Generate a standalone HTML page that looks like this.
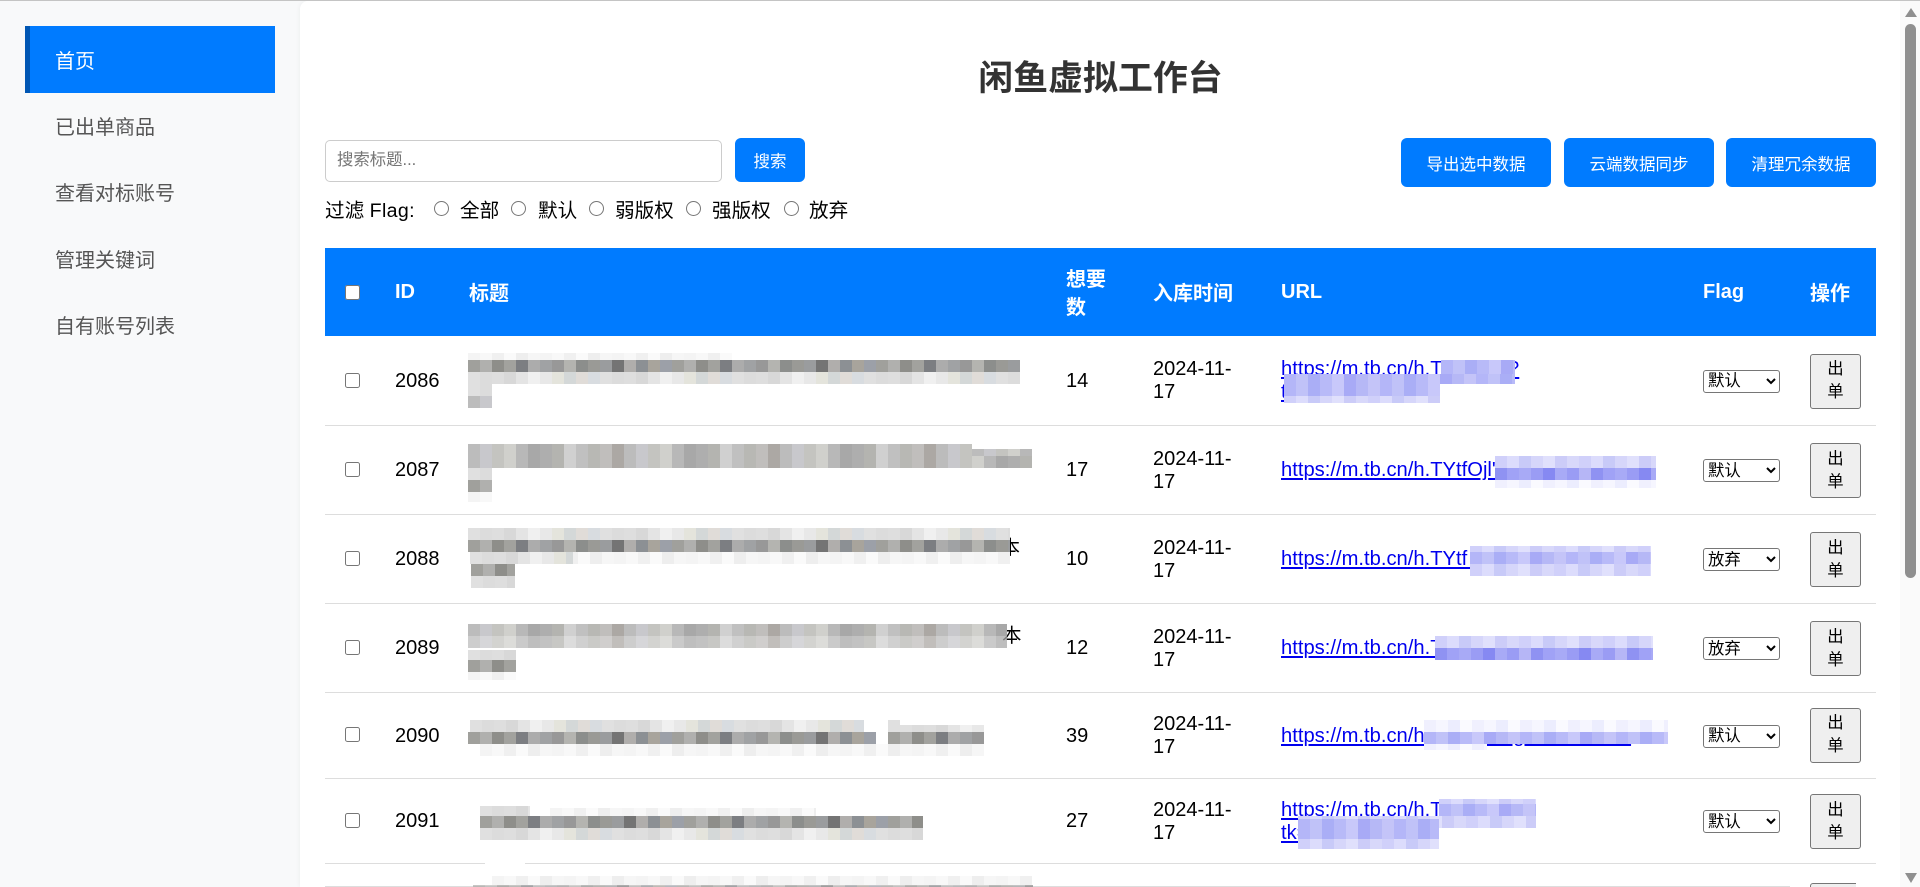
<!DOCTYPE html>
<html lang="zh-CN">
<head>
<meta charset="utf-8">
<title>闲鱼虚拟工作台</title>
<style>
*{box-sizing:border-box}
html,body{margin:0;padding:0;width:1920px;height:887px;overflow:hidden;background:#f8f9fa}
body{position:relative;font-family:"Liberation Sans","Noto Sans CJK SC",sans-serif;color:#000}
#topline{position:absolute;left:0;top:0;width:1920px;height:1px;background:#c4c4c4;z-index:20}
aside{position:absolute;left:0;top:1px;width:300px;height:886px;padding:25px 25px 0}
aside a{display:block;height:66.4px;line-height:71.4px;padding-left:30px;font-size:20px;color:#555;text-decoration:none}
aside a.on{height:67px;line-height:73px;background:#007bff;color:#fff;border-left:5px solid #0056b3;padding-left:25px}
main{position:absolute;left:300px;top:1px;width:1620px;height:886px;background:#fff;border-top-left-radius:8px;box-shadow:-1px 0 4px rgba(0,0,0,.04);overflow:hidden}
h1{position:absolute;left:25px;top:52px;width:1551px;margin:0;text-align:center;font-size:34.9px;line-height:52px;font-weight:700;color:#333}
.abs{position:absolute}
.search{left:25px;top:138.5px;width:397px;height:42px;border:1px solid #ccc;border-radius:5px;padding:0 11px;font:16.4px "Liberation Sans","Noto Sans CJK SC",sans-serif;outline:none;background:#fff}
.search::placeholder{color:#757575;opacity:1}
.btn{position:absolute;border:0;background:#007bff;color:#fff;border-radius:6px;font:16.5px "Liberation Sans","Noto Sans CJK SC",sans-serif;padding:0;text-align:center}
.flt{position:absolute;top:196px;font-size:19.6px;line-height:28px;white-space:nowrap}
.flt b{font-weight:400;letter-spacing:.35px}
input[type=radio]{position:absolute;margin:0;width:15px;height:15px;top:200px}
input[type=checkbox]{margin:0;width:15px;height:15px;display:block}
table{position:absolute;left:25px;top:247px;width:1551px;border-collapse:collapse;table-layout:fixed;font-size:20px;line-height:23px}
th{background:#007bff;color:#fff;font-weight:700;font-size:20px;text-align:left;padding:0 20px;height:88px;line-height:28.4px}
th span{position:relative;top:2px}
td{padding:0 20px;border-bottom:1px solid #ddd;vertical-align:middle;overflow:hidden}
td:nth-child(2),td:nth-child(4),td:nth-child(5),td:nth-child(6){padding-top:2px}
td:nth-child(6){font-size:20.2px}
td a{color:#0000ee;text-decoration:underline;white-space:nowrap}
select{display:block;width:77px;height:23px;font:16.4px "Liberation Sans","Noto Sans CJK SC",sans-serif;padding:0;margin-top:2px;border-radius:3px;border:1px solid #767676;background:#fff}
td button{display:block;width:51px;height:55px;margin:2px 0 0;padding:0 10px;font:16.4px/23px "Liberation Sans","Noto Sans CJK SC",sans-serif;background:#efefef;border:1px solid #767676;border-radius:3px;color:#000}
td .clip{height:23px;overflow:hidden}
td .clip button{margin-top:19px}
.z{position:absolute;background-repeat:repeat;z-index:5}
.d{background-size:204px 100%;background-image:linear-gradient(90deg,#a0a09c 0 12px,#b0b0ae 0 24px,#8e8e8a 0 36px,#a2a29e 0 48px,#7c7e82 0 60px,#acacac 0 72px,#a0a2a4 0 84px,#989898 0 96px,#b4b4b0 0 108px,#8c8e8c 0 120px,#9a9a96 0 132px,#9a9c9e 0 144px,#747474 0 156px,#b0aeac 0 168px,#8c9094 0 180px,#a8a49c 0 192px,#9ca0a8 0 204px)}
.m{background-size:156px 100%;background-image:linear-gradient(90deg,#bcbcbc 0 12px,#c8c8cc 0 24px,#c4c4c0 0 36px,#d0d0cc 0 48px,#b8b8b8 0 60px,#a8a8a8 0 72px,#aeaeae 0 84px,#b4b4b0 0 96px,#d0d0d0 0 108px,#c0c0c0 0 120px,#b8b8b4 0 132px,#c0bebc 0 144px,#aca8a4 0 156px)}
.l{background-size:132px 100%;background-image:linear-gradient(90deg,#e0e0e0 0 12px,#dcdcdc 0 24px,#dedede 0 36px,#d8d8d8 0 48px,#e4e4e4 0 60px,#f0f0f0 0 72px,#e8e8e8 0 84px,#e4e4dc 0 96px,#d4d8d8 0 108px,#e0dcd8 0 120px,#d8dce0 0 132px)}
.v{background-size:72px 100%;background-image:linear-gradient(90deg,#f4f4f4 0 12px,#f8f8f8 0 24px,#f0f0f0 0 36px,#fafafa 0 48px,#eeeeee 0 60px,#f6f6f6 0 72px)}
.bd{background-size:96px 100%;background-image:linear-gradient(90deg,#8f92f2 0 12px,#a0a2f6 0 24px,#a8aaf6 0 36px,#9a9cf4 0 48px,#8689f2 0 60px,#a8aaf6 0 72px,#9a9cf4 0 84px,#b6b6f6 0 96px)}
.bm{background-size:96px 100%;background-image:linear-gradient(90deg,#b4b6f8 0 12px,#c0c2f8 0 24px,#aaaef6 0 36px,#b8baf8 0 48px,#c8c8fa 0 60px,#a8aaf6 0 72px,#b6b8f6 0 84px,#c4c4f8 0 96px)}
.bl{background-size:84px 100%;background-image:linear-gradient(90deg,#d0d0fa 0 12px,#dcdcfc 0 24px,#c8caf8 0 36px,#d6d6fa 0 48px,#e0e0fc 0 60px,#ccccf8 0 72px,#d8d8fa 0 84px)}
.bv{background-size:48px 100%;background-image:linear-gradient(90deg,#f0f0fe 0 12px,#f6f6ff 0 24px,#ecedfe 0 36px,#fafaff 0 48px)}
.w{position:absolute;background:#fff;z-index:6}
#sb{position:absolute;left:1900px;top:1px;width:20px;height:886px;background:#fafafa;z-index:10}
#th{position:absolute;left:5px;top:23px;width:11px;height:554px;background:#8f8f8f;border-radius:6px}
#up{position:absolute;left:4.5px;top:7px;width:0;height:0;border-left:6px solid transparent;border-right:6px solid transparent;border-bottom:9px solid #8f8f8f}
#dn{position:absolute;left:4.5px;top:872px;width:0;height:0;border-left:6px solid transparent;border-right:6px solid transparent;border-top:10px solid #8f8f8f}
</style>
</head>
<body>
<div id="topline"></div>
<aside>
<a class="on" href="#">首页</a>
<a href="#">已出单商品</a>
<a href="#">查看对标账号</a>
<a href="#">管理关键词</a>
<a href="#">自有账号列表</a>
</aside>
<main>
<h1>闲鱼虚拟工作台</h1>
<input class="abs search" type="text" placeholder="搜索标题...">
<button class="btn" style="left:435px;top:137px;width:70px;height:44px">搜索</button>
<button class="btn" style="left:1101px;top:137px;width:150px;height:49px">导出选中数据</button>
<button class="btn" style="left:1264px;top:137px;width:150px;height:49px">云端数据同步</button>
<button class="btn" style="left:1426px;top:137px;width:150px;height:49px">清理冗余数据</button>
<span class="flt" style="left:25px">过滤 <b>Flag:</b></span>
<input type="radio" name="f" style="left:133.5px"><span class="flt" style="left:160px">全部</span>
<input type="radio" name="f" style="left:211px"><span class="flt" style="left:238px">默认</span>
<input type="radio" name="f" style="left:288.5px"><span class="flt" style="left:315px">弱版权</span>
<input type="radio" name="f" style="left:386px"><span class="flt" style="left:412px">强版权</span>
<input type="radio" name="f" style="left:483.5px"><span class="flt" style="left:509px">放弃</span>
<table>
<colgroup><col style="width:50px"><col style="width:74px"><col style="width:597px"><col style="width:87px"><col style="width:128px"><col style="width:422px"><col style="width:107px"><col style="width:86px"></colgroup>
<thead><tr><th><input type="checkbox"></th><th>ID</th><th><span>标题</span></th><th><span>想要数</span></th><th><span>入库时间</span></th><th>URL</th><th>Flag</th><th><span>操作</span></th></tr></thead>
<tbody>
<tr style="height:89px"><td><input type="checkbox"></td><td>2086</td><td></td><td>14</td><td>2024-11-17</td><td><a href="#">https://m.tb.cn/h.TuaBcDt?<br>tk=aBcDeFgHiJ</a></td><td><select><option>默认</option></select></td><td><button>出单</button></td></tr>
<tr style="height:89px"><td><input type="checkbox"></td><td>2087</td><td></td><td>17</td><td>2024-11-17</td><td><a href="#">https://m.tb.cn/h.TYtfOjl'aBcDeFgHiJk</a></td><td><select><option>默认</option></select></td><td><button>出单</button></td></tr>
<tr style="height:89px"><td><input type="checkbox"></td><td>2088</td><td></td><td>10</td><td>2024-11-17</td><td><a href="#">https://m.tb.cn/h.TYtf&nbsp;cDeFgHiJkL</a></td><td><select><option>放弃</option></select></td><td><button>出单</button></td></tr>
<tr style="height:89px"><td><input type="checkbox"></td><td>2089</td><td></td><td>12</td><td>2024-11-17</td><td><a href="#">https://m.tb.cn/h.TaBcDeFgHiJkLmN</a></td><td><select><option>放弃</option></select></td><td><button>出单</button></td></tr>
<tr style="height:86px"><td><input type="checkbox" style="margin-top:-2px"></td><td>2090</td><td></td><td>39</td><td>2024-11-17</td><td><a href="#">https://m.tb.cn/h.TaBcDeFgHiJkLmNoP</a></td><td><select><option>默认</option></select></td><td><button style="margin-top:0">出单</button></td></tr>
<tr style="height:85px"><td><input type="checkbox"></td><td>2091</td><td></td><td>27</td><td>2024-11-17</td><td><a href="#">https://m.tb.cn/h.TaBcDeF<br>tk=aBcDeFgHi</a></td><td><select><option>默认</option></select></td><td><button>出单</button></td></tr>
<tr style="height:23px"><td></td><td></td><td></td><td></td><td></td><td></td><td></td><td style="border:0"><div class="clip"><button>出单</button></div></td></tr>
</tbody>
</table>
<span class="abs" style="left:708px;top:536px;font-size:19.5px;line-height:22px;width:12px;overflow:hidden;direction:rtl">本</span>
<span class="abs" style="left:702px;top:624px;font-size:19.5px;line-height:22px">本</span>
</main>

<!-- title mosaics -->
<div class="z v" style="left:468px;top:353px;width:264px;height:7px"></div>
<div class="z d" style="left:468px;top:360px;width:552px;height:12px"></div>
<div class="z l" style="left:468px;top:372px;width:552px;height:12px"></div>
<div class="z l" style="left:468px;top:384px;width:24px;height:12px"></div>
<div class="z m" style="left:468px;top:396px;width:24px;height:12px"></div>

<div class="z m" style="left:468px;top:444px;width:504px;height:12px"></div>
<div class="z m" style="left:972px;top:449px;width:60px;height:7px"></div>
<div class="z m" style="left:468px;top:456px;width:564px;height:12px"></div>
<div class="z l" style="left:468px;top:468px;width:24px;height:12px"></div>
<div class="z d" style="left:468px;top:480px;width:24px;height:12px"></div>
<div class="z v" style="left:468px;top:492px;width:24px;height:10px"></div>

<div class="z l" style="left:468px;top:528px;width:542px;height:12px"></div>
<div class="z d" style="left:468px;top:540px;width:542px;height:12px"></div>
<div class="z v" style="left:470px;top:552px;width:540px;height:12px"></div>
<div class="z l" style="left:470px;top:552px;width:103px;height:12px"></div>
<div class="z d" style="left:471px;top:564px;width:44px;height:12px"></div>
<div class="z l" style="left:471px;top:576px;width:44px;height:12px"></div>

<div class="z m" style="left:468px;top:624px;width:539px;height:12px"></div>
<div class="z m" style="left:468px;top:636px;width:539px;height:12px;opacity:.75"></div>
<div class="z l" style="left:468px;top:650px;width:48px;height:10px"></div>
<div class="z d" style="left:468px;top:660px;width:48px;height:12px"></div>
<div class="z v" style="left:468px;top:672px;width:48px;height:8px"></div>

<div class="z l" style="left:470px;top:720px;width:394px;height:12px"></div>
<div class="z l" style="left:888px;top:720px;width:12px;height:12px"></div>
<div class="z l" style="left:900px;top:725px;width:84px;height:7px"></div>
<div class="z d" style="left:468px;top:732px;width:408px;height:12px"></div>
<div class="z d" style="left:888px;top:732px;width:96px;height:12px"></div>
<div class="z v" style="left:480px;top:744px;width:504px;height:12px"></div>

<div class="z l" style="left:480px;top:806px;width:50px;height:10px"></div>
<div class="z v" style="left:550px;top:808px;width:266px;height:8px"></div>
<div class="z d" style="left:480px;top:816px;width:443px;height:12px"></div>
<div class="z l" style="left:480px;top:828px;width:443px;height:12px"></div>
<div class="w" style="left:485px;top:862px;width:40px;height:3px"></div>
<div class="z v" style="left:492px;top:876px;width:540px;height:9px"></div>
<div class="z d" style="left:473px;top:885px;width:560px;height:2px;opacity:.6"></div>

<!-- url mosaics -->
<div class="z bm" style="left:1441px;top:360px;width:74px;height:14px"></div>
<div class="z bm" style="left:1284px;top:374px;width:231px;height:10px"></div>
<div class="z bm" style="left:1284px;top:384px;width:156px;height:12px"></div>
<div class="z bl" style="left:1284px;top:396px;width:156px;height:7px"></div>

<div class="z bl" style="left:1495px;top:456px;width:161px;height:12px"></div>
<div class="z bd" style="left:1495px;top:468px;width:161px;height:12px"></div>
<div class="z bv" style="left:1495px;top:480px;width:161px;height:8px"></div>

<div class="z bl" style="left:1470px;top:546px;width:181px;height:6px"></div>
<div class="z bm" style="left:1470px;top:552px;width:181px;height:12px"></div>
<div class="z bl" style="left:1470px;top:564px;width:181px;height:12px"></div>

<div class="z bl" style="left:1435px;top:636px;width:218px;height:12px"></div>
<div class="z bd" style="left:1435px;top:648px;width:218px;height:12px"></div>

<div class="z bv" style="left:1424px;top:720px;width:244px;height:12px"></div>
<div class="z bm" style="left:1424px;top:732px;width:244px;height:12px"></div>
<div class="z bv" style="left:1424px;top:744px;width:63px;height:6px"></div>

<div class="z bl" style="left:1439px;top:799px;width:97px;height:5px"></div>
<div class="z bm" style="left:1439px;top:804px;width:97px;height:12px"></div>
<div class="z bl" style="left:1298px;top:816px;width:238px;height:12px"></div>
<div class="z bm" style="left:1298px;top:819px;width:141px;height:20px"></div>
<div class="z bl" style="left:1298px;top:839px;width:141px;height:10px"></div>

<div id="sb"><div id="up"></div><div id="th"></div><div id="dn"></div></div>
</body>
</html>
